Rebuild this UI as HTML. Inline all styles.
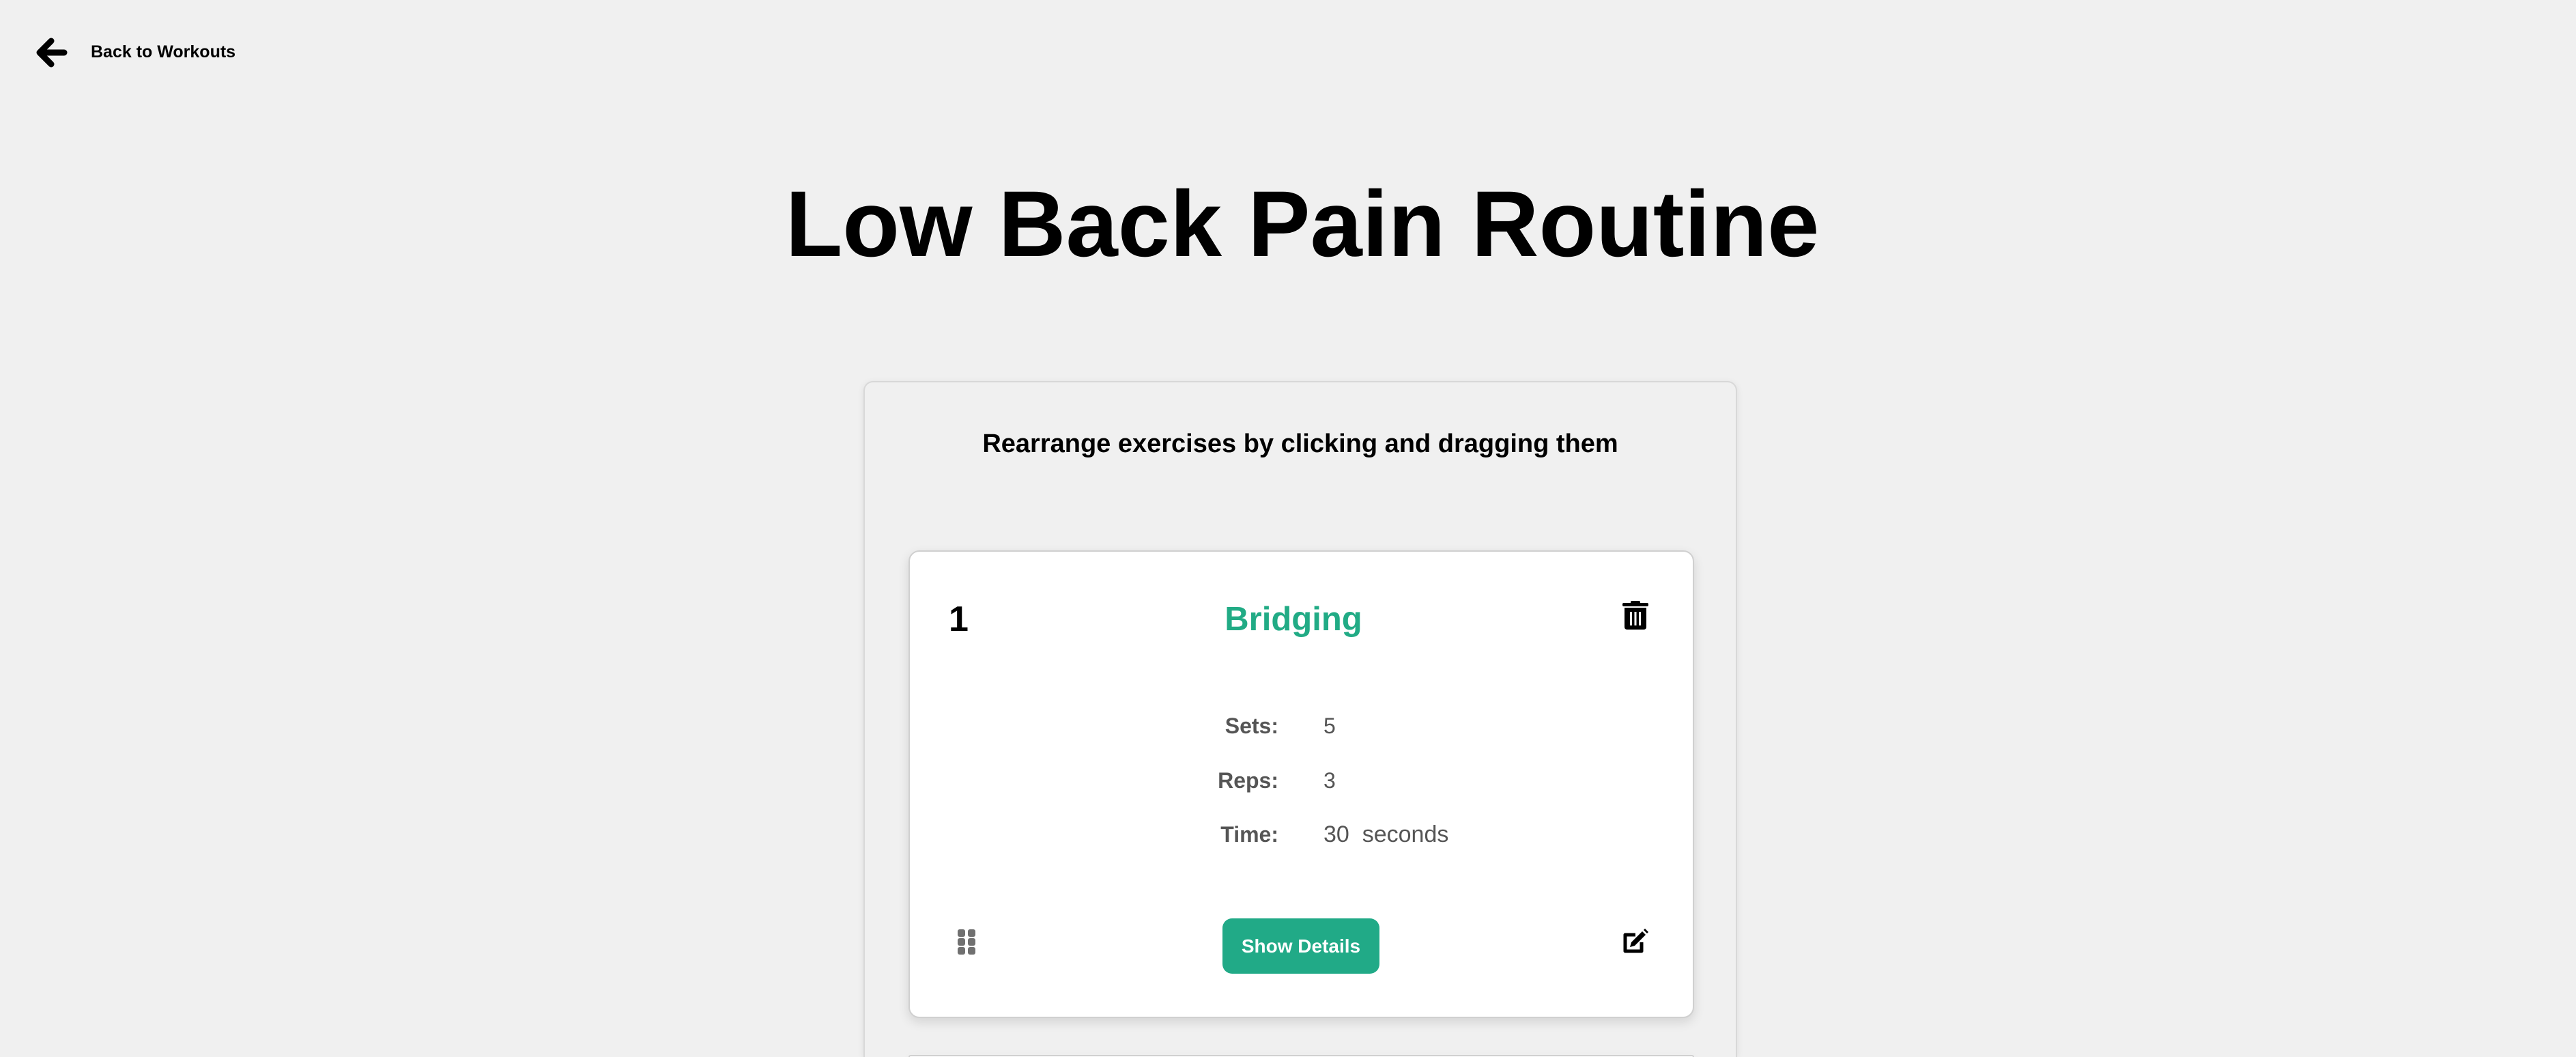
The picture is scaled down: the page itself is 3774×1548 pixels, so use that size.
<!DOCTYPE html>
<html><head><meta charset="utf-8"><style>
html,body{margin:0;padding:0;overflow:hidden;width:3774px;height:1548px;}
body{background:#f0f0f0;position:relative;font-family:"Liberation Sans",Arial,sans-serif;}
.a{position:absolute;white-space:nowrap;}
.outer{position:absolute;left:1265px;top:558px;width:1280px;height:990px;border:2px solid #d8d8d8;border-bottom:none;border-radius:14px 14px 0 0;background:#f0f0f0;box-shadow:0 2px 10px rgba(0,0,0,0.08);box-sizing:border-box;}
.inner{position:absolute;left:1331px;top:806px;width:1151px;height:685px;background:#fff;border:2px solid #d0d0d0;border-radius:16px;box-shadow:0 6px 16px rgba(0,0,0,0.12);box-sizing:border-box;}
.lbl{font-weight:bold;color:#555;font-size:32px;text-align:right;width:200px;left:1673px;}
.val{color:#555;font-size:32px;left:1939px;}
</style></head><body>
<svg class="a" style="left:50px;top:52px" width="50" height="50" viewBox="0 0 50 50"><path d="M44 25H10M25 8L8 25L25 42" stroke="#000" stroke-width="9" fill="none" stroke-linecap="round" stroke-linejoin="round"/></svg>
<div class="a" style="left:133px;top:60px;font-size:25px;font-weight:bold;line-height:32px;">Back to Workouts</div>
<div class="a" style="left:1107px;top:254px;font-size:137px;font-weight:bold;line-height:150px;width:1602px;text-align:center;">Low Back Pain Routine</div>
<div class="outer"></div>
<div class="a" style="left:1265px;width:1280px;text-align:center;top:627px;font-size:38px;font-weight:bold;line-height:46px;">Rearrange exercises by clicking and dragging them</div>
<div class="inner"></div>
<div class="inner" style="top:1545px;height:3px;border-bottom:none;border-radius:16px 16px 0 0;"></div>
<div class="a" style="left:1390px;top:880px;font-size:52px;font-weight:900;line-height:54px;">1</div>
<div class="a" style="left:1740px;width:310px;text-align:center;top:880px;font-size:49px;font-weight:bold;color:#21ab85;line-height:54px;">Bridging</div>
<svg class="a" style="left:2376px;top:880px" width="40" height="44" viewBox="0 0 40 44"><rect x="1" y="3" width="38" height="5" rx="2"/><rect x="13" y="0" width="14" height="5" rx="2"/><path d="M4 10H36V38Q36 42 32 42H8Q4 42 4 38Z"/><rect x="12" y="16" width="3" height="20" fill="#fff"/><rect x="18.5" y="16" width="3" height="20" fill="#fff"/><rect x="25" y="16" width="3" height="20" fill="#fff"/></svg>
<div class="a lbl" style="top:1043px;line-height:40px;">Sets:</div>
<div class="a val" style="top:1043px;line-height:40px;">5</div>
<div class="a lbl" style="top:1123px;line-height:40px;">Reps:</div>
<div class="a val" style="top:1123px;line-height:40px;">3</div>
<div class="a lbl" style="top:1202px;line-height:40px;">Time:</div>
<div class="a val" style="top:1202px;line-height:40px;font-size:34px;">30&nbsp; seconds</div>
<svg class="a" style="left:1403px;top:1361px" width="27" height="37" viewBox="0 0 27 37"><g fill="#707070"><rect x="0" y="0" width="11" height="11" rx="3"/><rect x="15" y="0" width="11" height="11" rx="3"/><rect x="0" y="13" width="11" height="11" rx="3"/><rect x="15" y="13" width="11" height="11" rx="3"/><rect x="0" y="26" width="11" height="11" rx="3"/><rect x="15" y="26" width="11" height="11" rx="3"/></g></svg>
<div class="a" style="left:1791px;top:1345px;width:230px;height:81px;background:#21aa87;border-radius:14px;color:#fff;font-weight:bold;font-size:28px;line-height:81px;text-align:center;">Show Details</div>
<svg class="a" style="left:2376px;top:1360px" width="40" height="38" viewBox="0 0 40 38"><path d="M20 9H5V33H29V20" stroke="#000" stroke-width="5" fill="none" stroke-linejoin="round"/><path d="M30 4L35 9L19 25L12 27L14 20Z" fill="#000"/><path d="M32 2L34 0L39 5L37 7Z" fill="#000"/></svg>
</body></html>
